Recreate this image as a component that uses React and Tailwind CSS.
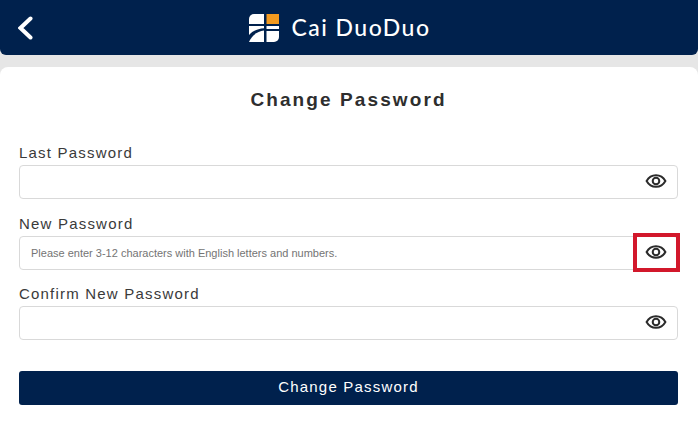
import { useState } from "react";

const FIELDS = [
  { label: "Last Password", placeholder: "" },
  { label: "New Password", placeholder: "Please enter 3-12 characters with English letters and numbers.", marked: true },
  { label: "Confirm New Password", placeholder: "" },
];

const Logo = () => (
  <svg width="30" height="30" viewBox="0 0 30 30" className="shrink-0">
    <path d="M5 1H15V11H0V6a5 5 0 0 1 5-5Z" fill="#ffffff" />
    <rect x="17.5" y="1" width="12.5" height="10" fill="#f39a1f" />
    <path d="M0 13H15V15.2C8.5 15.8 3.5 18 0 22Z" fill="#ffffff" />
    <path d="M0 29C2 23.5 8 18.2 15 17.6V29Z" fill="#ffffff" />
    <path d="M17.5 13H30V16H17.5Z" fill="#ffffff" />
    <path d="M17.5 18H30V24a5 5 0 0 1-5 5H17.5Z" fill="#ffffff" />
  </svg>
);

const EyeIcon = () => (
  <svg width="22" height="16" viewBox="0 0 22 16" fill="none" stroke="#2b2b2b" strokeWidth="2">
    <path d="M1.6 8C3.8 4 7 2.2 11 2.2S18.2 4 20.4 8c-2.2 4-5.4 5.8-9.4 5.8S3.8 12 1.6 8Z" />
    <circle cx="11" cy="8" r="3.3" />
  </svg>
);

const PasswordField = ({ label, placeholder, marked }) => {
  const [value, setValue] = useState("");
  const [visible, setVisible] = useState(false);

  return (
    <div className="flex flex-col">
      <label className="h-[19px] text-[15px] leading-[17px] tracking-[1.2px] text-[#3a3a3a]">{label}</label>
      <div className="relative mt-[2px] flex h-[34px] items-center rounded-[4px] border border-[#d9d9d9] bg-white">
        <input
          type={visible ? "text" : "password"}
          value={value}
          onChange={(e) => setValue(e.target.value)}
          placeholder={placeholder}
          className="h-full min-w-0 flex-1 bg-transparent pl-[11px] text-[11px] text-[#333] outline-none placeholder:text-[#747474]"
        />
        <button type="button" onClick={() => setVisible(!visible)} className="mb-[2px] mr-[10px] flex shrink-0 items-center">
          <EyeIcon />
        </button>
        {/* red annotation box around the eye */}
        {marked && (
          <div className="pointer-events-none absolute right-[-3px] top-[-4px] h-[39px] w-[47px] border-[4px] border-[#d2182b]"></div>
        )}
      </div>
    </div>
  );
};

const App = () => {
  return (
    <div className="h-[421px] w-[698px] overflow-hidden bg-[#e6e6e6] font-['Liberation_Sans',Arial,sans-serif]">
      <header className="grid h-[55px] grid-cols-[1fr_auto_1fr] items-center rounded-b-[6px] bg-[#00214d] px-[18px]">
        <button type="button" className="flex items-center justify-self-start">
          <svg width="15" height="24" viewBox="0 0 15 24" fill="none" stroke="#ffffff" strokeWidth="4" strokeLinecap="round">
            <path d="M12.5 2.5 2.5 12l10 9.5" />
          </svg>
        </button>
        <div className="mr-[19px] flex items-center gap-[13px]">
          <Logo />
          <span className="font-['Lato',sans-serif] text-[23px] font-medium leading-none tracking-[1.45px] text-white">
            Cai DuoDuo
          </span>
        </div>
      </header>

      <main className="mt-[12px] h-[354px] rounded-t-[8px] bg-white pl-[19px] pr-[20px] pt-[22px]">
        <h1 className="h-[22px] text-center text-[19px] font-bold leading-[22px] tracking-[2.1px] text-[#2e2e2e]">
          Change Password
        </h1>
        <form className="mt-[33px] flex flex-col gap-[15.5px]">
          {FIELDS.map((field) => (
            <PasswordField key={field.label} {...field} />
          ))}
          <button
            type="button"
            className="mt-[15px] h-[34px] rounded-[3px] bg-[#00214d] text-[15px] tracking-[1.2px] text-white"
          >
            Change Password
          </button>
        </form>
      </main>
    </div>
  );
};

export default App;
